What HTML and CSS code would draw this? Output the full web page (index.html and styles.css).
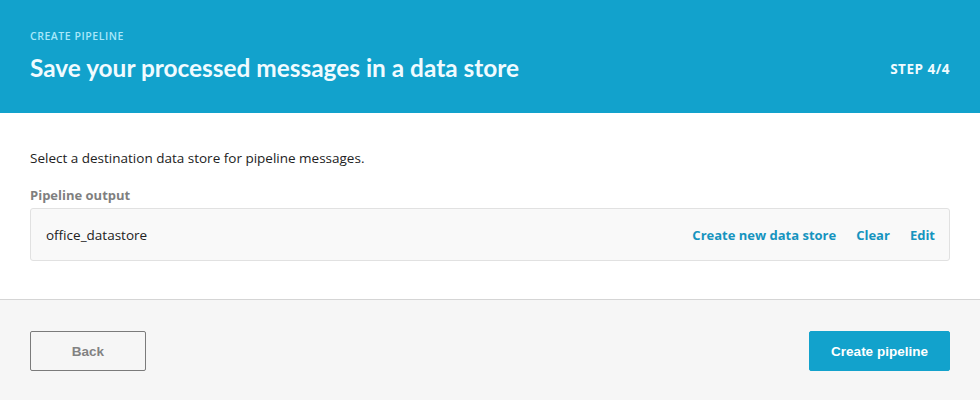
FILE: index.html
```html
<!DOCTYPE html>
<html>
<head>
<meta charset="utf-8">
<link rel="stylesheet" href="styles.css">
</head>
<body>
<header class="hero">
  <div class="hero-text">
    <div class="eyebrow">CREATE PIPELINE</div>
    <h1 class="title">Save your processed messages in a data store</h1>
  </div>
  <div class="step">STEP 4/4</div>
</header>
<main class="content">
  <p class="desc">Select a destination data store for pipeline messages.</p>
  <div class="label">Pipeline output</div>
  <div class="field">
    <span class="value">office_datastore</span>
    <div class="links">
      <a class="link">Create new data store</a>
      <a class="link">Clear</a>
      <a class="link">Edit</a>
    </div>
  </div>
</main>
<footer class="footer">
  <button class="btn btn-back">Back</button>
  <button class="btn btn-primary">Create pipeline</button>
</footer>
</body>
</html>
```
FILE: styles.css
```css
html, body { margin: 0; padding: 0; }
body {
  width: 980px;
  height: 400px;
  font-family: "Open Sans", "Noto Sans", sans-serif;
  background: #fff;
  overflow: hidden;
}
.hero {
  background: #12a2cc;
  height: 113px;
  box-sizing: border-box;
  padding: 0 30px;
  display: flex;
  justify-content: space-between;
  align-items: flex-start;
}
.hero-text { padding-top: 29px; }
.eyebrow {
  color: #a9e8fa;
  font-size: 10.5px;
  font-weight: 600;
  line-height: 14px;
  letter-spacing: 0.55px;
}
.title {
  margin: 10px 0 0;
  color: #f0fbff;
  font-family: Lato, "Open Sans", sans-serif;
  font-size: 24.4px;
  font-weight: 700;
  line-height: 30px;
}
.step {
  margin-top: 60px;
  color: #f0fbff;
  font-size: 13.5px;
  font-weight: 700;
  line-height: 18px;
  letter-spacing: 0.5px;
}
.content {
  padding: 36px 30px 39px;
  border-bottom: 1px solid #d5d5d5;
  height: 187px;
  box-sizing: border-box;
}
.desc {
  margin: 0;
  font-size: 13.5px;
  line-height: 18px;
  color: #222;
}
.label {
  margin-top: 19px;
  font-size: 13px;
  font-weight: 700;
  color: #7f7f7f;
  line-height: 18px;
}
.field {
  margin-top: 4px;
  height: 53px;
  box-sizing: border-box;
  background: #f9f9f9;
  border: 1px solid #e1e1e1;
  border-radius: 3px;
  display: flex;
  align-items: center;
  justify-content: space-between;
  padding: 0 14px 0 15px;
}
.value { font-size: 13.5px; color: #222; }
.links { display: flex; gap: 20px; }
.link {
  color: #1694bf;
  font-weight: 700;
  font-size: 13px;
}
.footer {
  background: #f6f6f6;
  height: 100px;
  box-sizing: border-box;
  padding: 31px 30px 0;
  display: flex;
  justify-content: space-between;
  align-items: flex-start;
}
.btn {
  font-family: "Liberation Sans", Arial, sans-serif;
  font-weight: 700;
  font-size: 13.5px;
  height: 40px;
  border-radius: 2px;
  cursor: pointer;
}
.btn-back {
  width: 116px;
  background: transparent;
  border: 1px solid #7b7b7b;
  color: #828282;
}
.btn-primary {
  width: 141px;
  background: #12a2cc;
  border: 1px solid #12a2cc;
  color: #fff;
}
```
